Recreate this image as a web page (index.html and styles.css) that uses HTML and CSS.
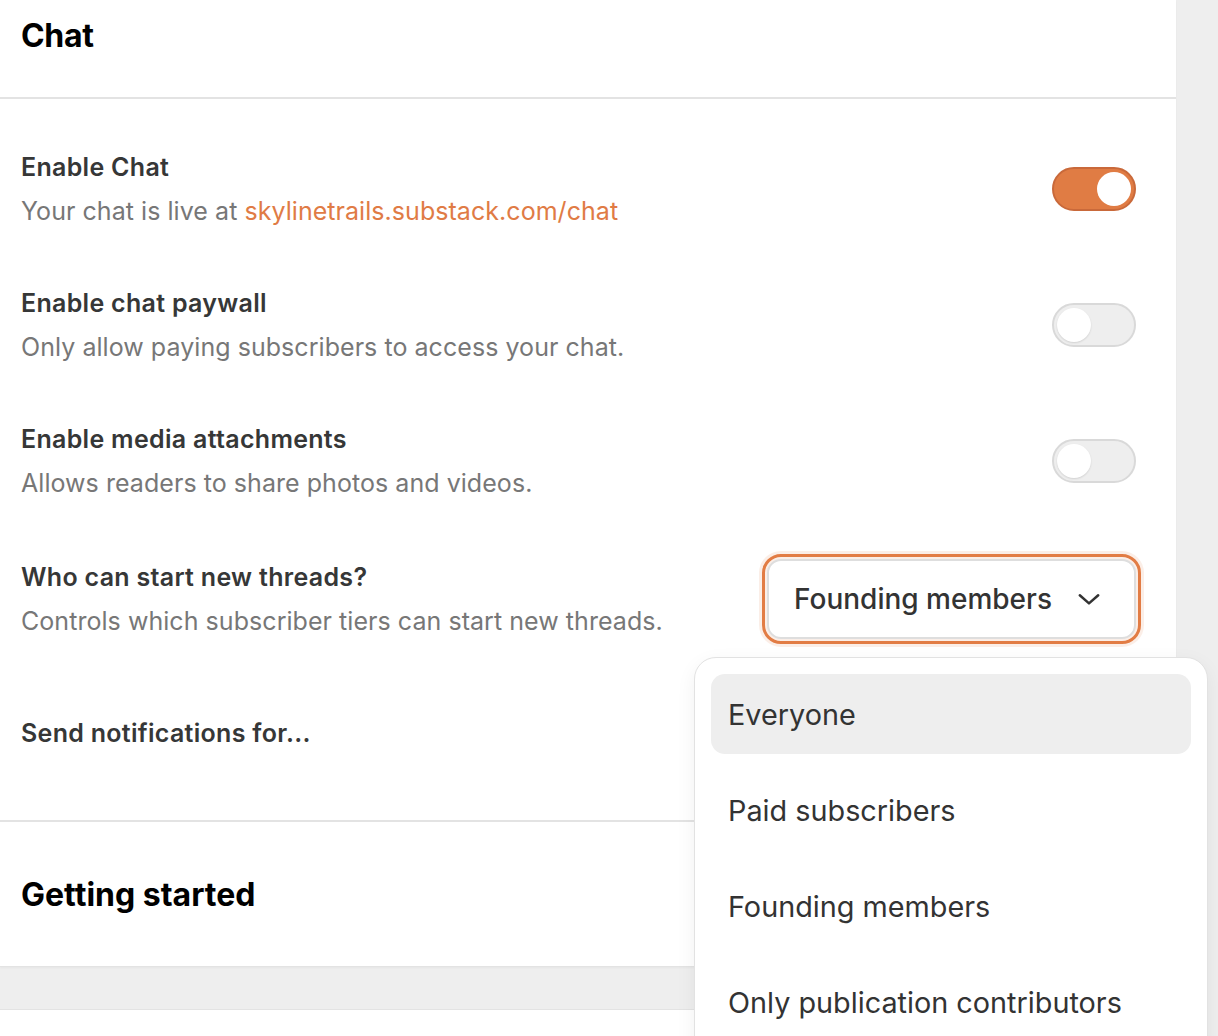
FILE: index.html
```html
<!DOCTYPE html>
<html>
<head>
<meta charset="utf-8">
<link rel="stylesheet" href="styles.css">
</head>
<body>
<div class="page">
  <div class="card">
    <div class="card-head">
      <h1 class="card-title">Chat</h1>
    </div>
    <div class="card-body">
      <div class="row">
        <div class="row-text">
          <div class="row-title">Enable Chat</div>
          <div class="row-desc">Your chat is live at <span class="link">skylinetrails.substack.com/chat</span></div>
        </div>
        <div class="toggle on"><span class="knob"></span></div>
      </div>
      <div class="row">
        <div class="row-text">
          <div class="row-title">Enable chat paywall</div>
          <div class="row-desc">Only allow paying subscribers to access your chat.</div>
        </div>
        <div class="toggle"><span class="knob"></span></div>
      </div>
      <div class="row">
        <div class="row-text">
          <div class="row-title">Enable media attachments</div>
          <div class="row-desc">Allows readers to share photos and videos.</div>
        </div>
        <div class="toggle"><span class="knob"></span></div>
      </div>
      <div class="row">
        <div class="row-text">
          <div class="row-title">Who can start new threads?</div>
          <div class="row-desc">Controls which subscriber tiers can start new threads.</div>
        </div>
        <div class="select-wrap">
          <div class="select">
            <span class="select-value">Founding members</span>
            <svg class="chevron" width="26" height="26" viewBox="0 0 24 24" fill="none" stroke="#333" stroke-width="2.3" stroke-linecap="round" stroke-linejoin="round"><path d="M3.5 8.5l8.5 7.5 8.5-7.5"/></svg>
          </div>
          <div class="menu">
            <div class="menu-item active">Everyone</div>
            <div class="menu-item">Paid subscribers</div>
            <div class="menu-item">Founding members</div>
            <div class="menu-item">Only publication contributors</div>
          </div>
        </div>
      </div>
      <div class="row row-last">
        <div class="row-text">
          <div class="row-title">Send notifications for...</div>
        </div>
      </div>
    </div>
    <div class="card-section">
      <h2 class="section-title">Getting started</h2>
    </div>
  </div>
  <div class="card card-next"></div>
</div>
</body>
</html>
```

FILE: styles.css
```css
* { box-sizing: border-box; }
html, body {
  margin: 0;
  padding: 0;
  background: #eeeeee;
  font-family: Inter, "Noto Sans", "Liberation Sans", sans-serif;
  overflow: hidden;
}
.page {
  width: 1176px;
}
.card {
  background: #fff;
  border-bottom: 1px solid #e3e3e3;
  box-shadow: 0 1px 2px rgba(0,0,0,0.04);
}
.card-head {
  height: 99px;
  border-bottom: 2px solid #e3e3e3;
  padding: 17px 21px 0;
}
.card-title {
  margin: 0;
  font-size: 32px;
  line-height: 38px;
  font-weight: 700;
  color: #000;
  letter-spacing: -0.3px;
}
.card-body {
  padding: 52px 40px 0 21px;
  border-bottom: 2px solid #e3e3e3;
}
.row {
  display: flex;
  align-items: center;
  justify-content: space-between;
  margin-bottom: 60px;
}
.row-last {
  margin-top: 78px;
  margin-bottom: 0;
  padding-bottom: 71px;
}
.row-text {
  display: flex;
  flex-direction: column;
  gap: 12px;
}
.row-title {
  font-size: 25px;
  line-height: 32px;
  font-weight: 600;
  color: #363737;
  letter-spacing: 0.3px;
}
.row-desc {
  font-size: 25px;
  line-height: 32px;
  color: #777;
  letter-spacing: 0.05px;
}
.link { color: #e07b45; }
.toggle {
  width: 84px;
  height: 44px;
  border-radius: 22px;
  background: #eeeeee;
  border: 2px solid #d9d9d9;
  position: relative;
  flex-shrink: 0;
}
.toggle .knob {
  position: absolute;
  top: 3px;
  left: 3px;
  width: 34px;
  height: 34px;
  border-radius: 50%;
  background: #fff;
  box-shadow: 0 1px 2px rgba(0,0,0,0.12);
}
.toggle.on {
  background: #e07c44;
  border-color: #c9693a;
}
.toggle.on .knob {
  left: auto;
  right: 3px;
  box-shadow: none;
}
.select-wrap {
  position: relative;
}
.select {
  width: 369px;
  height: 80px;
  display: flex;
  align-items: center;
  justify-content: space-between;
  padding: 0 32px 0 25px;
  border: 2px solid #dedede;
  border-radius: 14px;
  outline: 3px solid #e27c44;
  outline-offset: 2px;
  box-shadow: 0 0 0 8px rgba(226,124,68,0.13);
  background: #fff;
}
.select-value {
  font-size: 28px;
  font-weight: 500;
  color: #333;
}
.chevron { display: block; }
.menu {
  position: absolute;
  left: -73px;
  top: 98px;
  width: 514px;
  height: 420px;
  background: #fff;
  border: 1px solid #e2e2e2;
  border-radius: 22px;
  box-shadow: 0 6px 20px rgba(0,0,0,0.06);
  padding: 16px;
  display: flex;
  flex-direction: column;
  gap: 16px;
  z-index: 10;
}
.menu-item {
  height: 80px;
  display: flex;
  align-items: center;
  padding-left: 17px;
  border-radius: 14px;
  font-size: 28.8px;
  color: #333;
}
.menu-item.active {
  background: #eeeeee;
}
.card-section {
  height: 144px;
  padding: 53px 21px 0;
}
.section-title {
  margin: 0;
  font-size: 32px;
  line-height: 40px;
  font-weight: 700;
  color: #000;
  letter-spacing: 0;
}
.card-next {
  margin-top: 42px;
  height: 200px;
  border-top: 1px solid #e3e3e3;
}
```
